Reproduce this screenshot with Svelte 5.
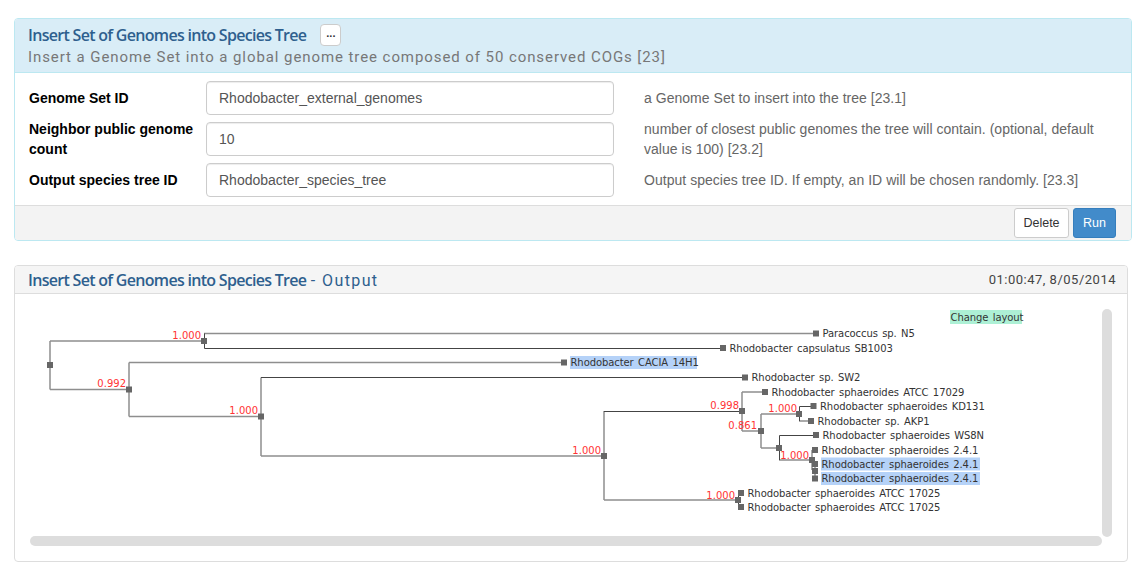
<script>
	const fields = [
		{ label: 'Genome Set ID', value: 'Rhodobacter_external_genomes', hint: 'a Genome Set to insert into the tree [23.1]' },
		{ label: 'Neighbor public genome count', value: '10', hint: 'number of closest public genomes the tree will contain. (optional, default value is 100) [23.2]' },
		{ label: 'Output species tree ID', value: 'Rhodobacter_species_tree', hint: 'Output species tree ID. If empty, an ID will be chosen randomly. [23.3]' }
	];

	// tree coordinates use page pixels, the svg viewBox is offset to match
	const gray = [
		[50, 341, 50, 389.5], [50, 341, 204, 341], [50, 389.5, 129, 389.5],
		[204, 333.5, 815, 333.5], [129, 362.5, 129, 416.5], [129, 362.5, 564, 362.5],
		[129, 416.5, 261, 416.5], [261, 377.5, 261, 456], [261, 456, 604, 456],
		[604, 411, 604, 500], [604, 500, 738, 500], [742, 392, 742, 431],
		[742, 392, 764, 392], [742, 431, 761, 431], [761, 414, 761, 448],
		[761, 414, 799, 414], [761, 448, 779, 448], [799, 421, 809, 421],
		[779, 460, 812, 460], [812, 450, 812, 470], [815, 464, 815, 478]
	];
	const dark = [
		[204.5, 333.5, 204.5, 348.5], [204.5, 348.5, 722, 348.5], [261, 377.5, 744, 377.5],
		[604, 411.5, 742, 411.5], [779.5, 435.5, 779.5, 460], [779.5, 435.5, 815, 435.5],
		[799.5, 406.5, 799.5, 421], [799.5, 406.5, 812, 406.5], [738.5, 493, 738.5, 507],
		[738.5, 493.5, 741, 493.5], [738.5, 507.5, 741, 507.5]
	];
	const inner = [
		[50, 365], [204, 341], [129, 389.5], [261, 416.5], [604, 456], [742, 411],
		[761, 431], [799, 414], [779, 448], [812, 460], [815, 471], [738, 500]
	];
	const leaves = [
		{ x: 816, y: 333.5, name: 'Paracoccus sp. N5' },
		{ x: 723, y: 348, name: 'Rhodobacter capsulatus SB1003' },
		{ x: 564, y: 362.5, name: 'Rhodobacter CACIA 14H1', mark: 127 },
		{ x: 745, y: 377.5, name: 'Rhodobacter sp. SW2' },
		{ x: 765, y: 392, name: 'Rhodobacter sphaeroides ATCC 17029' },
		{ x: 813.5, y: 406, name: 'Rhodobacter sphaeroides KD131' },
		{ x: 811, y: 421, name: 'Rhodobacter sp. AKP1' },
		{ x: 816, y: 435, name: 'Rhodobacter sphaeroides WS8N' },
		{ x: 815, y: 450, name: 'Rhodobacter sphaeroides 2.4.1' },
		{ x: 815, y: 464, name: 'Rhodobacter sphaeroides 2.4.1', mark: 159 },
		{ x: 815, y: 478.5, name: 'Rhodobacter sphaeroides 2.4.1', mark: 159 },
		{ x: 741, y: 493, name: 'Rhodobacter sphaeroides ATCC 17025' },
		{ x: 741, y: 507, name: 'Rhodobacter sphaeroides ATCC 17025' }
	];
	const support = [
		{ x: 201, y: 339, text: '1.000' }, { x: 126, y: 387, text: '0.992' },
		{ x: 258, y: 414, text: '1.000' }, { x: 601, y: 454, text: '1.000' },
		{ x: 739, y: 409, text: '0.998' }, { x: 757, y: 429, text: '0.861' },
		{ x: 797, y: 412, text: '1.000' }, { x: 809, y: 459, text: '1.000' },
		{ x: 735, y: 499, text: '1.000' }
	];
</script>

<div class="page">
	<section class="panel method">
		<header class="method-head">
			<div class="title-row">
				<h2>Insert Set of Genomes into Species Tree</h2>
				<button class="more">...</button>
			</div>
			<p class="subtitle">Insert a Genome Set into a global genome tree composed of 50 conserved COGs [23]</p>
		</header>
		<div class="fields">
			{#each fields as f}
				<label class="name" for={f.label}>{f.label}</label>
				<input id={f.label} value={f.value} />
				<span class="hint">{f.hint}</span>
			{/each}
		</div>
		<footer class="actions">
			<button class="btn">Delete</button>
			<button class="btn run">Run</button>
		</footer>
	</section>

	<section class="panel output">
		<header class="output-head">
			<h2>Insert Set of Genomes into Species Tree <span>- Output</span></h2>
			<time>01:00:47, 8/05/2014</time>
		</header>
		<div class="viewer">
			<svg viewBox="30 309 1072 227" width="1072" height="227">
				{#each leaves as l}
					{#if l.mark}
						<rect class="mark" x={l.x + 6} y={l.y - 6.5} width={l.mark} height="13" />
					{/if}
				{/each}
				<rect class="layout-bg" x="950" y="310" width="72" height="14" />
				<text class="leaf" x="950.5" y="320.5">Change layout</text>
				{#each gray as [x1, y1, x2, y2]}
					<line class="gray" {x1} {y1} {x2} {y2} />
				{/each}
				{#each dark as [x1, y1, x2, y2]}
					<line class="dark" {x1} {y1} {x2} {y2} />
				{/each}
				{#each inner as [x, y]}
					<rect class="node" x={x - 3} y={y - 3} width="6" height="6" />
				{/each}
				{#each leaves as l}
					<rect class="node" x={l.x - 3} y={l.y - 3} width="6" height="6" />
					<text class="leaf" x={l.x + 6.5} y={l.y + 3.5}>{l.name}</text>
				{/each}
				{#each support as s}
					<text class="support" x={s.x} y={s.y} text-anchor="end">{s.text}</text>
				{/each}
			</svg>
			<div class="vbar"></div>
			<div class="hbar"></div>
		</div>
	</section>
</div>

<style>
	:global(body) {
		background: #fff;
		font-family: 'Liberation Sans', Arial, sans-serif;
	}

	.page {
		padding: 18px 13px 0 14px;
	}

	.panel {
		border: 1px solid #bce8f1;
		border-radius: 4px;
		overflow: hidden;
	}

	h2 {
		margin: 0;
		font-family: 'Open Sans', sans-serif;
		font-size: 16px;
		font-weight: 600;
		letter-spacing: -0.7px;
		color: #2e5f8e;
	}

	.method-head {
		height: 54px;
		box-sizing: border-box;
		padding: 4px 13px 0;
		background: #d9edf7;
		border-bottom: 1px solid #bce8f1;
	}

	.title-row {
		display: flex;
		align-items: center;
		gap: 14px;
		height: 22px;
		margin-top: 1px;
	}

	.more {
		width: 21px;
		height: 22px;
		padding: 0 0 4px;
		background: #fff;
		border: 1px solid #ccc;
		border-radius: 4px;
		font: bold 11px 'Liberation Sans', sans-serif;
		color: #333;
	}

	.subtitle {
		margin: 1px 0 0;
		font-family: Roboto, sans-serif;
		font-size: 15px;
		letter-spacing: 0.92px;
		line-height: 20px;
		color: #777;
	}

	.fields {
		display: grid;
		grid-template-columns: 177px 408px 1fr;
		grid-auto-rows: 34px;
		row-gap: 7px;
		align-items: center;
		padding: 8px 14px;
		font-size: 14px;
		line-height: 20px;
	}

	.name {
		font-weight: bold;
		color: #000;
		padding-right: 8px;
	}

	input {
		box-sizing: border-box;
		width: 100%;
		height: 34px;
		padding: 0 12px;
		border: 1px solid #ccc;
		border-radius: 4px;
		font: 14px 'Liberation Sans', sans-serif;
		color: #555;
		box-shadow: inset 0 1px 1px rgba(0, 0, 0, 0.075);
	}

	.hint {
		padding-left: 30px;
		letter-spacing: 0.03px;
		color: #666;
	}

	.actions {
		display: flex;
		justify-content: flex-end;
		gap: 4px;
		height: 35px;
		box-sizing: border-box;
		padding: 2px 15px 0;
		background: #f3f3f3;
		border-top: 1px solid #ddd;
	}

	.btn {
		width: 55px;
		height: 30px;
		padding: 0;
		background: #fff;
		border: 1px solid #ccc;
		border-radius: 3px;
		font: 12.5px 'Liberation Sans', sans-serif;
		color: #333;
	}

	.run {
		width: 43px;
		background: #428bca;
		border-color: #357ebd;
		color: #fff;
	}

	.output {
		margin-top: 24px;
		margin-right: 4px;
		border-color: #ddd;
	}

	.output-head {
		display: flex;
		justify-content: space-between;
		align-items: center;
		height: 28px;
		box-sizing: border-box;
		padding: 0 11px 0 13px;
		background: #f5f5f5;
		border-bottom: 1px solid #ddd;
	}

	.output-head span {
		font-family: Roboto, sans-serif;
		font-weight: 400;
		font-size: 16px;
		letter-spacing: 1.4px;
		margin-left: 1px;
	}

	time {
		font-family: Roboto, sans-serif;
		font-size: 13px;
		letter-spacing: 0.5px;
		color: #444;
	}

	.viewer {
		display: grid;
		grid-template-columns: 1072px 10px;
		grid-template-rows: 228px 10px;
		padding: 15px 0 14px 15px;
	}

	svg {
		display: block;
	}

	.vbar {
		background: #ddd;
		border-radius: 5px;
	}

	.hbar {
		background: #ddd;
		border-radius: 5px;
		margin-top: -1px;
		height: 10px;
	}

	.gray {
		stroke: #8e8e8e;
		stroke-width: 1.5;
	}

	.dark {
		stroke: #444;
		stroke-width: 1;
	}

	.node {
		fill: #666;
	}

	.mark {
		fill: #b5d2f8;
	}

	.layout-bg {
		fill: #adf0d5;
	}

	.leaf {
		font-family: 'DejaVu Sans', sans-serif;
		font-size: 10px;
		letter-spacing: -0.08px;
		word-spacing: 1.3px;
		fill: #333;
	}

	.support {
		font-family: 'DejaVu Sans', sans-serif;
		font-size: 10px;
		fill: #f33;
	}
</style>
